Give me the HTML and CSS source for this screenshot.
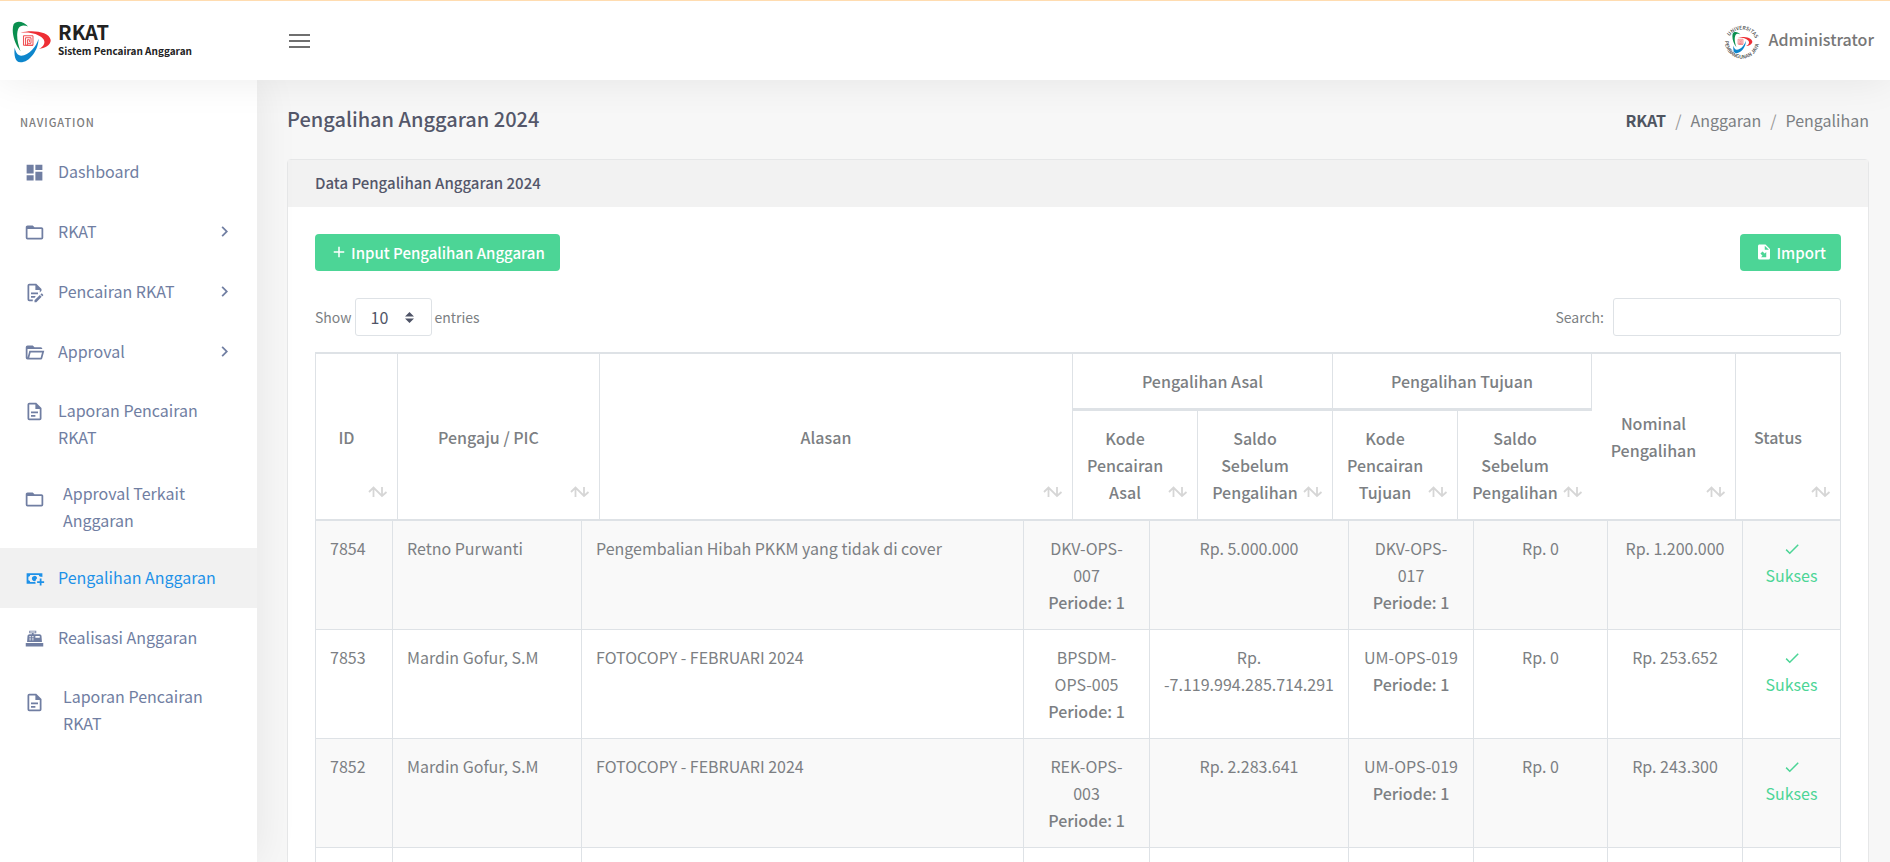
FILE: index.html
```html
<!DOCTYPE html>
<html lang="id">
<head>
<meta charset="utf-8">
<meta name="viewport" content="width=device-width, initial-scale=1">
<title>RKAT - Pengalihan Anggaran</title>
<link rel="stylesheet" href="styles.css">
</head>
<body>
<svg class="sprite" aria-hidden="true">
  <symbol id="i-dashboard" viewBox="0 0 24 24"><path d="M13,3V9H21V3M13,21H21V11H13M3,21H11V15H3M3,13H11V3H3V13Z"/></symbol>
  <symbol id="i-folder" viewBox="0 0 24 24"><path d="M20,18H4V8H20M20,6H12L10,4H4C2.89,4 2,4.89 2,6V18A2,2 0 0,0 4,20H20A2,2 0 0,0 22,18V8C22,6.89 21.1,6 20,6Z"/></symbol>
  <symbol id="i-file-edit" viewBox="0 0 24 24"><path d="M8,12H16V14H8V12M10,20H6V4H13V9H18V12.1L20,10.1V8L14,2H6A2,2 0 0,0 4,4V20A2,2 0 0,0 6,22H10V20M8,18H12.1L13,17.1V16H8V18M20.2,13C20.3,13 20.5,13.1 20.6,13.2L21.9,14.5C22.1,14.7 22.1,15.1 21.9,15.3L20.9,16.3L18.8,14.2L19.8,13.2C19.9,13.1 20,13 20.2,13M20.2,16.9L14.1,23H12V20.9L18.1,14.8L20.2,16.9Z"/></symbol>
  <symbol id="i-folder-open" viewBox="0 0 24 24"><path d="M6.1,10L4,18V8H21A2,2 0 0,0 19,6H12L10,4H4A2,2 0 0,0 2,6V18A2,2 0 0,0 4,20H19C19.9,20 20.7,19.4 20.9,18.5L23.2,10H6.1M19,18H6L7.6,12H20.6L19,18Z"/></symbol>
  <symbol id="i-file" viewBox="0 0 24 24"><path d="M6,2A2,2 0 0,0 4,4V20A2,2 0 0,0 6,22H18A2,2 0 0,0 20,20V8L14,2H6M6,4H13V9H18V20H6V4M8,12V14H16V12H8M8,16V18H13V16H8Z"/></symbol>
  <symbol id="i-cash-plus" viewBox="0 0 24 24"><path d="M15 15V17H18V20H20V17H23V15H20V12H18V15M14.97 11.61C14.85 10.28 13.59 8.97 12 9C10.3 9.04 9 10.3 9 12C9 13.7 10.3 14.94 12 15C12.38 15 12.77 14.92 13.14 14.77C13.41 13.67 13.86 12.63 14.97 11.61M13 16H7C7 14.9 6.1 14 5 14V10C6.1 10 7 9.1 7 8H17C17 9.1 17.9 10 19 10V10.06C19.67 10.06 20.34 10.18 21 10.4V6H3V18H13.32C13.1 17.33 13 16.66 13 16Z"/></symbol>
  <symbol id="i-register" viewBox="0 0 24 24"><path fill-rule="evenodd" d="M2,17H22V21H2V17M6.25,7H9V6H6V3H14V6H11V7H17.8C18.8,7 19.8,8 20,9L20.5,16H3.5L4,9C4.2,8 5.25,7 6.25,7M13,9V11H18V9H13M6,9V10H8V9H6M9,9V10H11V9H9M6,11V12H8V11H6M9,11V12H11V11H9M6,13V14H8V13H6M9,13V14H11V13H9M7,4V5H13V4H7Z"/></symbol>
  <symbol id="i-chevron" viewBox="0 0 24 24"><path d="M8.59,16.58L13.17,12L8.59,7.41L10,6L16,12L10,18L8.59,16.58Z"/></symbol>
  <symbol id="i-plus" viewBox="0 0 24 24"><path d="M19,13H13V19H11V13H5V11H11V5H13V11H19V13Z"/></symbol>
  <symbol id="i-check" viewBox="0 0 24 24"><path d="M21,7L9,19L3.5,13.5L4.91,12.09L9,16.17L19.59,5.59L21,7Z"/></symbol>
  <symbol id="i-import" viewBox="0 0 24 24"><path fill-rule="evenodd" d="M14,2H6C4.89,2 4,2.9 4,4V20A2,2 0 0,0 6,22H18A2,2 0 0,0 20,20V8L14,2M10.05,11.22L12.88,14.05L15,11.93V19H7.93L10.05,16.88L7.22,14.05L10.05,11.22M13,9V3.5L18.5,9H13"/></symbol>
  <symbol id="i-sort" viewBox="0 0 20 12"><path d="M1 6L5.500 1.500L14 10L18.500 6M5.500 2V11M14 1V10" fill="none" stroke="currentColor" stroke-width="1.800"/></symbol>
  <symbol id="i-logo" viewBox="36 60 122 132">
    <path fill="#0a8f4f" d="M85 79C72 62 48 60 41 72C34 90 40 127 62 154C52 128 48 100 56 84C62 74 74 74 85 79Z"/>
    <path fill="#ee2e34" d="M62 98C95 88 150 94 154 120C155 135 135 146 118 147C134 140 140 125 130 115C116 101 90 94 62 98Z"/>
    <path fill="#0d86cc" d="M44 143C42 165 44 188 62 188C90 188 117 150 117 116C110 140 88 167 64 168C54 168 47 158 44 143Z"/>
    <path fill="none" stroke="#f04a4e" stroke-width="3" d="M71 136V107H100V136H77V113H94V130H83V119H89V126M71 136H100M83 136V130"/>
  </symbol>
</svg>

<div class="app">
  <header class="topbar">
    <a class="brand" href="#">
      <svg class="brand-mark" aria-hidden="true"><use href="#i-logo"/></svg>
      <span class="brand-text"><span class="brand-name">RKAT</span><span class="brand-sub">Sistem Pencairan Anggaran</span></span>
    </a>
    <button class="menu-toggle" type="button" aria-label="Menu"><span></span><span></span><span></span></button>
    <a class="user" href="#">
      <svg class="avatar" viewBox="0 0 36 36" aria-hidden="true">
        <path id="ring-top" fill="none" d="M3.500 20A14.500 14.500 0 1 1 32.500 20"/>
        <path id="ring-bottom" fill="none" d="M1 16A17 17 0 0 0 35 19"/>
        <text class="ring"><textPath href="#ring-top" startOffset="8">UNIVERSITAS</textPath></text>
        <text class="ring"><textPath href="#ring-bottom" startOffset="1">PEMBANGUNAN JAYA</textPath></text>
        <use href="#i-logo" x="8" y="7" width="21" height="23"/>
      </svg>
      <span>Administrator</span>
    </a>
  </header>

  <nav class="sidebar" aria-label="Navigation">
    <h2 class="nav-title">NAVIGATION</h2>
    <ul class="nav">
      <li><a class="nav-link" href="#"><svg class="icon"><use href="#i-dashboard"/></svg><span>Dashboard</span></a></li>
      <li><a class="nav-link" href="#"><svg class="icon"><use href="#i-folder"/></svg><span>RKAT</span><svg class="icon chevron"><use href="#i-chevron"/></svg></a></li>
      <li><a class="nav-link" href="#"><svg class="icon"><use href="#i-file-edit"/></svg><span>Pencairan RKAT</span><svg class="icon chevron"><use href="#i-chevron"/></svg></a></li>
      <li><a class="nav-link" href="#"><svg class="icon"><use href="#i-folder-open"/></svg><span>Approval</span><svg class="icon chevron"><use href="#i-chevron"/></svg></a></li>
      <li><a class="nav-link snug" href="#"><svg class="icon"><use href="#i-file"/></svg><span>Laporan Pencairan RKAT</span></a></li>
      <li><a class="nav-link indented snug" href="#"><svg class="icon"><use href="#i-folder"/></svg><span>Approval Terkait Anggaran</span></a></li>
      <li><a class="nav-link active" href="#" aria-current="page"><svg class="icon"><use href="#i-cash-plus"/></svg><span>Pengalihan Anggaran</span></a></li>
      <li><a class="nav-link" href="#"><svg class="icon"><use href="#i-register"/></svg><span>Realisasi Anggaran</span></a></li>
      <li><a class="nav-link indented snug" href="#"><svg class="icon"><use href="#i-file"/></svg><span>Laporan Pencairan RKAT</span></a></li>
    </ul>
  </nav>

  <main class="content">
    <div class="page-head">
      <h1>Pengalihan Anggaran 2024</h1>
      <ol class="breadcrumb">
        <li><a href="#">RKAT</a></li>
        <li>Anggaran</li>
        <li>Pengalihan</li>
      </ol>
    </div>

    <section class="card">
      <h2 class="card-head">Data Pengalihan Anggaran 2024</h2>
      <div class="card-body">
        <div class="row actions">
          <button class="btn" type="button"><svg class="btn-icon"><use href="#i-plus"/></svg>Input Pengalihan Anggaran</button>
          <button class="btn" type="button"><svg class="btn-icon"><use href="#i-import"/></svg>Import</button>
        </div>
        <div class="row filters">
          <div class="length">
            <label for="len">Show</label>
            <span class="select-wrap">
              <select id="len"><option>10</option><option>25</option><option>50</option></select>
              <svg class="caret" viewBox="0 0 10 12" aria-hidden="true"><path d="M5 0L10 5H0ZM0 7H10L5 12Z"/></svg>
            </span>
            <span>entries</span>
          </div>
          <div class="search"><label for="q">Search:</label><input id="q" type="search"></div>
        </div>

        <table class="grid grid-head">
          <colgroup><col class="h-id"><col class="h-pic"><col><col class="h-code"><col class="h-from"><col class="h-code"><col class="h-to"><col class="h-nominal"><col class="h-status"></colgroup>
          <thead>
            <tr>
              <th rowspan="2">ID<button class="sort" type="button" aria-label="Sort ID"><svg><use href="#i-sort"/></svg></button></th>
              <th rowspan="2">Pengaju / PIC<button class="sort" type="button" aria-label="Sort Pengaju"><svg><use href="#i-sort"/></svg></button></th>
              <th rowspan="2">Alasan<button class="sort" type="button" aria-label="Sort Alasan"><svg><use href="#i-sort"/></svg></button></th>
              <th class="group" colspan="2">Pengalihan Asal</th>
              <th class="group group-last" colspan="2">Pengalihan Tujuan</th>
              <th class="open" rowspan="2">Nominal Pengalihan<button class="sort" type="button" aria-label="Sort Nominal"><svg><use href="#i-sort"/></svg></button></th>
              <th rowspan="2">Status<button class="sort" type="button" aria-label="Sort Status"><svg><use href="#i-sort"/></svg></button></th>
            </tr>
            <tr>
              <th>Kode Pencairan Asal<button class="sort" type="button" aria-label="Sort Kode Asal"><svg><use href="#i-sort"/></svg></button></th>
              <th>Saldo Sebelum Pengalihan<button class="sort" type="button" aria-label="Sort Saldo Asal"><svg><use href="#i-sort"/></svg></button></th>
              <th>Kode Pencairan Tujuan<button class="sort" type="button" aria-label="Sort Kode Tujuan"><svg><use href="#i-sort"/></svg></button></th>
              <th>Saldo Sebelum Pengalihan<button class="sort" type="button" aria-label="Sort Saldo Tujuan"><svg><use href="#i-sort"/></svg></button></th>
            </tr>
          </thead>
        </table>

        <table class="grid grid-body">
          <colgroup><col class="b-id"><col class="b-pic"><col><col class="b-code"><col class="b-from"><col class="b-code-to"><col class="b-to"><col class="b-nominal"><col class="b-status"></colgroup>
          <tbody>
            <tr>
              <td>7854</td><td>Retno Purwanti</td><td>Pengembalian Hibah PKKM yang tidak di cover</td>
              <td class="code">DKV-OPS-007<br><b>Periode: 1</b></td><td>Rp. 5.000.000</td>
              <td class="code">DKV-OPS-017<br><b>Periode: 1</b></td><td>Rp. 0</td><td>Rp. 1.200.000</td>
              <td class="ok"><svg><use href="#i-check"/></svg><span>Sukses</span></td>
            </tr>
            <tr>
              <td>7853</td><td>Mardin Gofur, S.M</td><td>FOTOCOPY - FEBRUARI 2024</td>
              <td class="code">BPSDM-OPS-005<br><b>Periode: 1</b></td><td>Rp. <span class="nowrap">-7.119.994.285.714.291</span></td>
              <td class="code"><span class="nowrap">UM-OPS-019</span><br><b>Periode: 1</b></td><td>Rp. 0</td><td>Rp. 253.652</td>
              <td class="ok"><svg><use href="#i-check"/></svg><span>Sukses</span></td>
            </tr>
            <tr>
              <td>7852</td><td>Mardin Gofur, S.M</td><td>FOTOCOPY - FEBRUARI 2024</td>
              <td class="code">REK-OPS-003<br><b>Periode: 1</b></td><td>Rp. 2.283.641</td>
              <td class="code"><span class="nowrap">UM-OPS-019</span><br><b>Periode: 1</b></td><td>Rp. 0</td><td>Rp. 243.300</td>
              <td class="ok"><svg><use href="#i-check"/></svg><span>Sukses</span></td>
            </tr>
            <tr class="pending"><td></td><td></td><td></td><td></td><td></td><td></td><td></td><td></td><td></td></tr>
          </tbody>
        </table>
      </div>
    </section>
  </main>
</div>
</body>
</html>
```
FILE: styles.css
```css
* { box-sizing: border-box; }

body {
  margin: 0;
  font-family: "Noto Sans CJK SC", "Noto Sans", sans-serif;
  font-size: 16px;
  line-height: 27px;
  color: #7c7f83;
  background: #f7f7f7;
}

a { color: inherit; text-decoration: none; }
button, input, select { font: inherit; color: inherit; }
h1, h2, ul, ol { margin: 0; padding: 0; list-style: none; }
svg { fill: currentColor; }
.sprite { display: none; }
.nowrap { white-space: nowrap; }

.app {
  display: grid;
  grid-template: auto minmax(0, 1fr) / 257px minmax(0, 1fr);
  height: 100vh;
  overflow: hidden;
}

/* Top bar */
.topbar {
  grid-column: 1 / -1;
  z-index: 3;
  display: flex;
  align-items: center;
  height: 80px;
  padding-right: 16px;
  border-top: 1px solid #ffdcb0;
  background: #fff;
  box-shadow: 0 0 40px rgba(0, 0, 0, 0.08);
}
.brand { display: flex; align-items: center; gap: 6px; width: 289px; padding-left: 12px; }
.brand-mark { width: 40px; height: 44px; margin-top: 2px; }
.brand-text { display: flex; flex-direction: column; padding-bottom: 4px; color: #222; font-weight: 700; }
.brand-name { font-size: 20px; line-height: 24px; }
.brand-sub { font-size: 10px; line-height: 14px; }
.menu-toggle {
  display: flex;
  flex-direction: column;
  gap: 4px;
  width: 21px;
  padding: 0;
  border: 0;
  background: none;
}
.menu-toggle span { height: 2px; background: #6f6f6f; }
.user { display: flex; align-items: center; gap: 9px; margin-left: auto; font-weight: 500; color: #777; }
.user span { padding-bottom: 2px; }
.avatar { width: 36px; height: 36px; margin-top: 2px; }
.ring { font-size: 5px; fill: #444; }

/* Sidebar */
.sidebar { z-index: 2; padding-top: 29px; background: #fff; box-shadow: 0 0 40px rgba(0, 0, 0, 0.08); }
.nav-title { padding: 0 20px 6px; font-size: 11px; font-weight: 500; letter-spacing: 1px; color: #7c7c7c; }
.nav-link { display: flex; gap: 13px; padding: 16px 22px 17px 24px; color: #707ea2; }
.nav-link span { flex: 1; }
.icon { flex: none; width: 21px; height: 21px; margin-top: 4px; }
.chevron { margin-top: 3px; }
.snug { padding-top: 15px; padding-bottom: 14px; }
.indented { gap: 18px; }
.indented .icon { margin-top: 9px; }
.active { color: #1e91e8; background: #f1f1f1; }

/* Page heading */
.content { overflow: auto; scrollbar-width: none; padding: 25px 21px 26px 30px; }
.page-head { display: flex; justify-content: space-between; align-items: flex-start; margin-bottom: 25px; }
h1 { font-size: 20px; font-weight: 500; color: #54576a; }
.breadcrumb { display: flex; padding-top: 2px; }
.breadcrumb li + li::before { content: "/"; padding: 0 9px; color: #999; }
.breadcrumb a { font-weight: 700; color: #4f5561; }

/* Card */
.card { border: 1px solid #e6e7e8; border-radius: 4px; background: #fff; }
.card-head { padding: 9px 27px 11px; font-size: 15px; font-weight: 500; color: #54576a; background: #f2f2f2; }
.card-body { padding: 27px; }
.row { display: flex; justify-content: space-between; }
.actions { margin-bottom: 27px; }
.btn {
  display: flex;
  align-items: center;
  gap: 3px;
  height: 37px;
  padding: 0 15px 1px;
  border: 0;
  border-radius: 4px;
  font-size: 15px;
  font-weight: 500;
  color: #fff;
  background: #4cd596;
}
.btn-icon { width: 18px; height: 18px; }
.filters { margin-bottom: 16px; font-size: 14px; }
.length, .search { display: flex; align-items: center; gap: 3px; }
.search { gap: 9px; }
.select-wrap { position: relative; }
.select-wrap select, .search input {
  display: block;
  height: 38px;
  border: 1px solid #dee2e6;
  border-radius: 3px;
  background: #fff;
}
.select-wrap select { width: 77px; padding: 0 15px; font-size: 16px; color: #4f5467; appearance: none; }
.search input { width: 228px; padding: 0 12px; }
.caret { position: absolute; top: 14px; right: 18px; width: 9px; height: 11px; fill: #4f5467; pointer-events: none; }

/* Data grid */
.grid { width: 100%; table-layout: fixed; border-spacing: 0; text-align: center; }
.grid th, .grid td { border-left: 1px solid #dee2e6; }
.grid tr:first-child > :last-child, .grid td:last-child { border-right: 1px solid #dee2e6; }
.grid th {
  position: relative;
  padding: 14px 34px 13px 14px;
  border-bottom: 2px solid #dee2e6;
  font-weight: 500;
}
.grid-head { border-top: 2px solid #dee2e6; }
.grid .group { padding-right: 14px; border-bottom-width: 3px; }
.grid .group-last { border-right: 1px solid #dee2e6; }
.grid .open { border-left: 0; }
.sort { position: absolute; right: 9px; bottom: 21px; padding: 0; border: 0; background: none; color: #d6d6d6; }
.sort svg { display: block; width: 20px; height: 12px; }
.grid td { padding: 14px 14px 13px; border-bottom: 1px solid #dee2e6; vertical-align: top; }
.grid .code { padding-left: 15px; padding-right: 15px; }
.grid td:nth-child(-n+3) { text-align: left; }
.grid-body tr:nth-child(odd) { background: #f9f9f9; }
.grid b { font-weight: 500; }
.grid .ok { color: #4cd596; }
.ok svg { display: block; width: 18px; height: 18px; margin: 5px auto 4px; }
.pending { height: 109px; }

.h-id { width: 82px; }
.h-pic { width: 202px; }
.h-code { width: 125px; }
.h-from, .h-to { width: 135px; }
.h-nominal { width: 143px; }
.h-status { width: 106px; }
.b-id { width: 77px; }
.b-pic { width: 189px; }
.b-code { width: 126px; }
.b-from { width: 199px; }
.b-code-to { width: 125px; }
.b-to { width: 134px; }
.b-nominal { width: 135px; }
.b-status { width: 99px; }
```
